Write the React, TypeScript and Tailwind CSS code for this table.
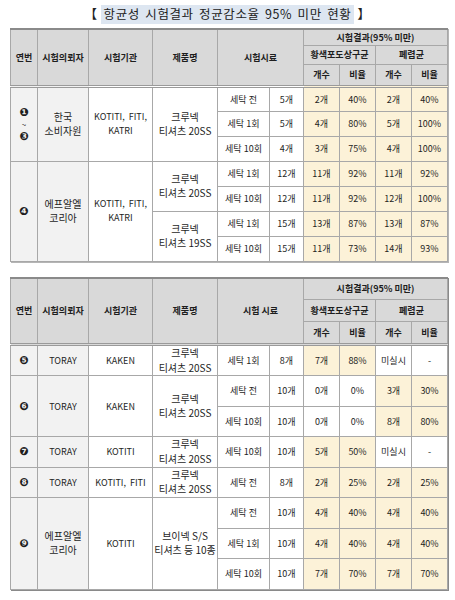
import React from "react";

const FONT = { fontFamily: '"Noto Sans CJK KR", "Noto Sans", sans-serif' };

const Y = "bg-[#fcf2d8]";
const W = "bg-white";
const G = "bg-[#f2f2f2]";
const td = "border border-[#a8a8a8] text-center align-middle px-0 leading-[13px]";
const big = " text-[10px] leading-[14.5px]";
const th = "border border-[#a8a8a8] bg-[#d9d9d9] text-center align-middle font-bold px-0 leading-[13px]";
const dbl = " border-b-[3px] border-b-[#9a9a9a] [border-bottom-style:double]";

function Cols() {
  return (
    <colgroup>
      <col className="w-[27px]" />
      <col className="w-[51px]" />
      <col className="w-[64px]" />
      <col className="w-[65px]" />
      <col className="w-[52px]" />
      <col className="w-[34px]" />
      <col className="w-[36px]" />
      <col className="w-[36px]" />
      <col className="w-[36px]" />
      <col className="w-[36px]" />
    </colgroup>
  );
}

function Head({ sample, h }: { sample: string; h: [string, string, string] }) {
  return (
    <thead>
      <tr className={h[0]}>
        <th rowSpan={3} className={th + dbl}>연번</th>
        <th rowSpan={3} className={th + dbl}>시험의뢰자</th>
        <th rowSpan={3} className={th + dbl}>시험기관</th>
        <th rowSpan={3} className={th + dbl}>제품명</th>
        <th rowSpan={3} colSpan={2} className={th + dbl}>{sample}</th>
        <th colSpan={4} className={th}>시험결과(95% 미만)</th>
      </tr>
      <tr className={h[1]}>
        <th colSpan={2} className={th}>황색포도상구균</th>
        <th colSpan={2} className={th}>폐렴균</th>
      </tr>
      <tr className={h[2]}>
        <th className={th + dbl}>개수</th>
        <th className={th + dbl}>비율</th>
        <th className={th + dbl}>개수</th>
        <th className={th + dbl}>비율</th>
      </tr>
    </thead>
  );
}

type R = [string, string, string, string, string, string, boolean, boolean];

function Cells({ r }: { r: R }) {
  const a = r[6] ? Y : W;
  const b = r[7] ? Y : W;
  return (
    <>
      <td className={td + " " + W}>{r[0]}</td>
      <td className={td + " " + W}>{r[1]}</td>
      <td className={td + " " + a}>{r[2]}</td>
      <td className={td + " " + a}>{r[3]}</td>
      <td className={td + " " + b}>{r[4]}</td>
      <td className={td + " " + b}>{r[5]}</td>
    </>
  );
}

const Num = ({ c }: { c: string }) => (
  <span className="block font-bold text-[11px] leading-[13px]" style={{ fontFamily: '"DejaVu Sans", sans-serif' }}>
    {c}
  </span>
);

const Two = ({ a, b }: { a: string; b: string }) => (
  <>
    <span className="block">{a}</span>
    <span className="block">{b}</span>
  </>
);

export default function App() {
  const t1h = "h-[25px]";
  const t2h = "h-[30.5px]";
  return (
    <div className="w-[455px] h-[600px] bg-white text-[#1e1e1e] text-[9px]" style={FONT}>
      <div className="h-[28px] flex items-center justify-center text-[12.5px] text-[#222] pt-[1px] tracking-[0.6px]">
        <span>【</span>
        <span className="bg-[#dde6f1] px-[3px] mx-[3px] [word-spacing:2px]">항균성 시험결과 정균감소율 95% 미만 현황</span>
        <span>】</span>
      </div>

      <div className="pl-[10px]">
        <table className="table-fixed border-collapse w-[437px] border-t-2 border-t-[#8a8a8a] shadow-[1px_1px_0_0_#b5b5b5]">
          <Cols />
          <Head sample="시험시료" h={["h-[16px]", "h-[19px]", "h-[22px]"]} />
          <tbody>
            <tr className={t1h}>
              <td rowSpan={3} className={td + " " + G}>
                <div className="flex flex-col items-center">
                  <Num c="❶" />
                  <span className="block text-[8px] leading-[11px]">~</span>
                  <Num c="❸" />
                </div>
              </td>
              <td rowSpan={3} className={td + " " + G + big}><Two a="한국" b="소비자원" /></td>
              <td rowSpan={3} className={td + " " + W + " leading-[14px]"}><Two a={"KOTITI,\u00a0 FITI,"} b="KATRI" /></td>
              <td rowSpan={3} className={td + " " + W + big}><Two a="크루넥" b="티셔츠 20SS" /></td>
              <Cells r={["세탁 전", "5개", "2개", "40%", "2개", "40%", true, true]} />
            </tr>
            <tr className={t1h}>
              <Cells r={["세탁 1회", "5개", "4개", "80%", "5개", "100%", true, true]} />
            </tr>
            <tr className={t1h}>
              <Cells r={["세탁 10회", "4개", "3개", "75%", "4개", "100%", true, true]} />
            </tr>
            <tr className={t1h}>
              <td rowSpan={4} className={td + " " + G}><Num c="❹" /></td>
              <td rowSpan={4} className={td + " " + G + big}><Two a="에프알엘" b="코리아" /></td>
              <td rowSpan={4} className={td + " " + W + " leading-[14px]"}><Two a={"KOTITI,\u00a0 FITI,"} b="KATRI" /></td>
              <td rowSpan={2} className={td + " " + W + big}><Two a="크루넥" b="티셔츠 20SS" /></td>
              <Cells r={["세탁 1회", "12개", "11개", "92%", "11개", "92%", true, true]} />
            </tr>
            <tr className={t1h}>
              <Cells r={["세탁 10회", "12개", "11개", "92%", "12개", "100%", true, true]} />
            </tr>
            <tr className={t1h}>
              <td rowSpan={2} className={td + " " + W + big}><Two a="크루넥" b="티셔츠 19SS" /></td>
              <Cells r={["세탁 1회", "15개", "13개", "87%", "13개", "87%", true, true]} />
            </tr>
            <tr className={t1h}>
              <Cells r={["세탁 10회", "15개", "11개", "73%", "14개", "93%", true, true]} />
            </tr>
          </tbody>
        </table>

        <table className="mt-[15px] table-fixed border-collapse w-[437px] border-t-2 border-t-[#8a8a8a] shadow-[1px_1px_0_0_#8a8a8a]">
          <Cols />
          <Head sample="시험 시료" h={["h-[22px]", "h-[22px]", "h-[23px]"]} />
          <tbody>
            <tr className={t2h}>
              <td className={td + " " + G}><Num c="❺" /></td>
              <td className={td + " " + G}>TORAY</td>
              <td className={td + " " + W}>KAKEN</td>
              <td className={td + " " + W + big}><Two a="크루넥" b="티셔츠 20SS" /></td>
              <Cells r={["세탁 1회", "8개", "7개", "88%", "미실시", "-", true, false]} />
            </tr>
            <tr className={t2h}>
              <td rowSpan={2} className={td + " " + G}><Num c="❻" /></td>
              <td rowSpan={2} className={td + " " + G}>TORAY</td>
              <td rowSpan={2} className={td + " " + W}>KAKEN</td>
              <td rowSpan={2} className={td + " " + W + big}><Two a="크루넥" b="티셔츠 20SS" /></td>
              <Cells r={["세탁 전", "10개", "0개", "0%", "3개", "30%", false, true]} />
            </tr>
            <tr className={t2h}>
              <Cells r={["세탁 10회", "10개", "0개", "0%", "8개", "80%", false, true]} />
            </tr>
            <tr className={t2h}>
              <td className={td + " " + G}><Num c="❼" /></td>
              <td className={td + " " + G}>TORAY</td>
              <td className={td + " " + W}>KOTITI</td>
              <td className={td + " " + W + big}><Two a="크루넥" b="티셔츠 20SS" /></td>
              <Cells r={["세탁 10회", "10개", "5개", "50%", "미실시", "-", true, false]} />
            </tr>
            <tr className={t2h}>
              <td className={td + " " + G}><Num c="❽" /></td>
              <td className={td + " " + G}>TORAY</td>
              <td className={td + " " + W}>{"KOTITI,\u00a0 FITI"}</td>
              <td className={td + " " + W + big}><Two a="크루넥" b="티셔츠 20SS" /></td>
              <Cells r={["세탁 전", "8개", "2개", "25%", "2개", "25%", true, true]} />
            </tr>
            <tr className={t2h}>
              <td rowSpan={3} className={td + " " + G}><Num c="❾" /></td>
              <td rowSpan={3} className={td + " " + G + big}><Two a="에프알엘" b="코리아" /></td>
              <td rowSpan={3} className={td + " " + W}>KOTITI</td>
              <td rowSpan={3} className={td + " " + W + big}><Two a="브이넥 S/S" b="티셔츠 등 10종" /></td>
              <Cells r={["세탁 전", "10개", "4개", "40%", "4개", "40%", true, true]} />
            </tr>
            <tr className={t2h}>
              <Cells r={["세탁 1회", "10개", "4개", "40%", "4개", "40%", true, true]} />
            </tr>
            <tr className={t2h}>
              <Cells r={["세탁 10회", "10개", "7개", "70%", "7개", "70%", true, true]} />
            </tr>
          </tbody>
        </table>
      </div>
    </div>
  );
}
